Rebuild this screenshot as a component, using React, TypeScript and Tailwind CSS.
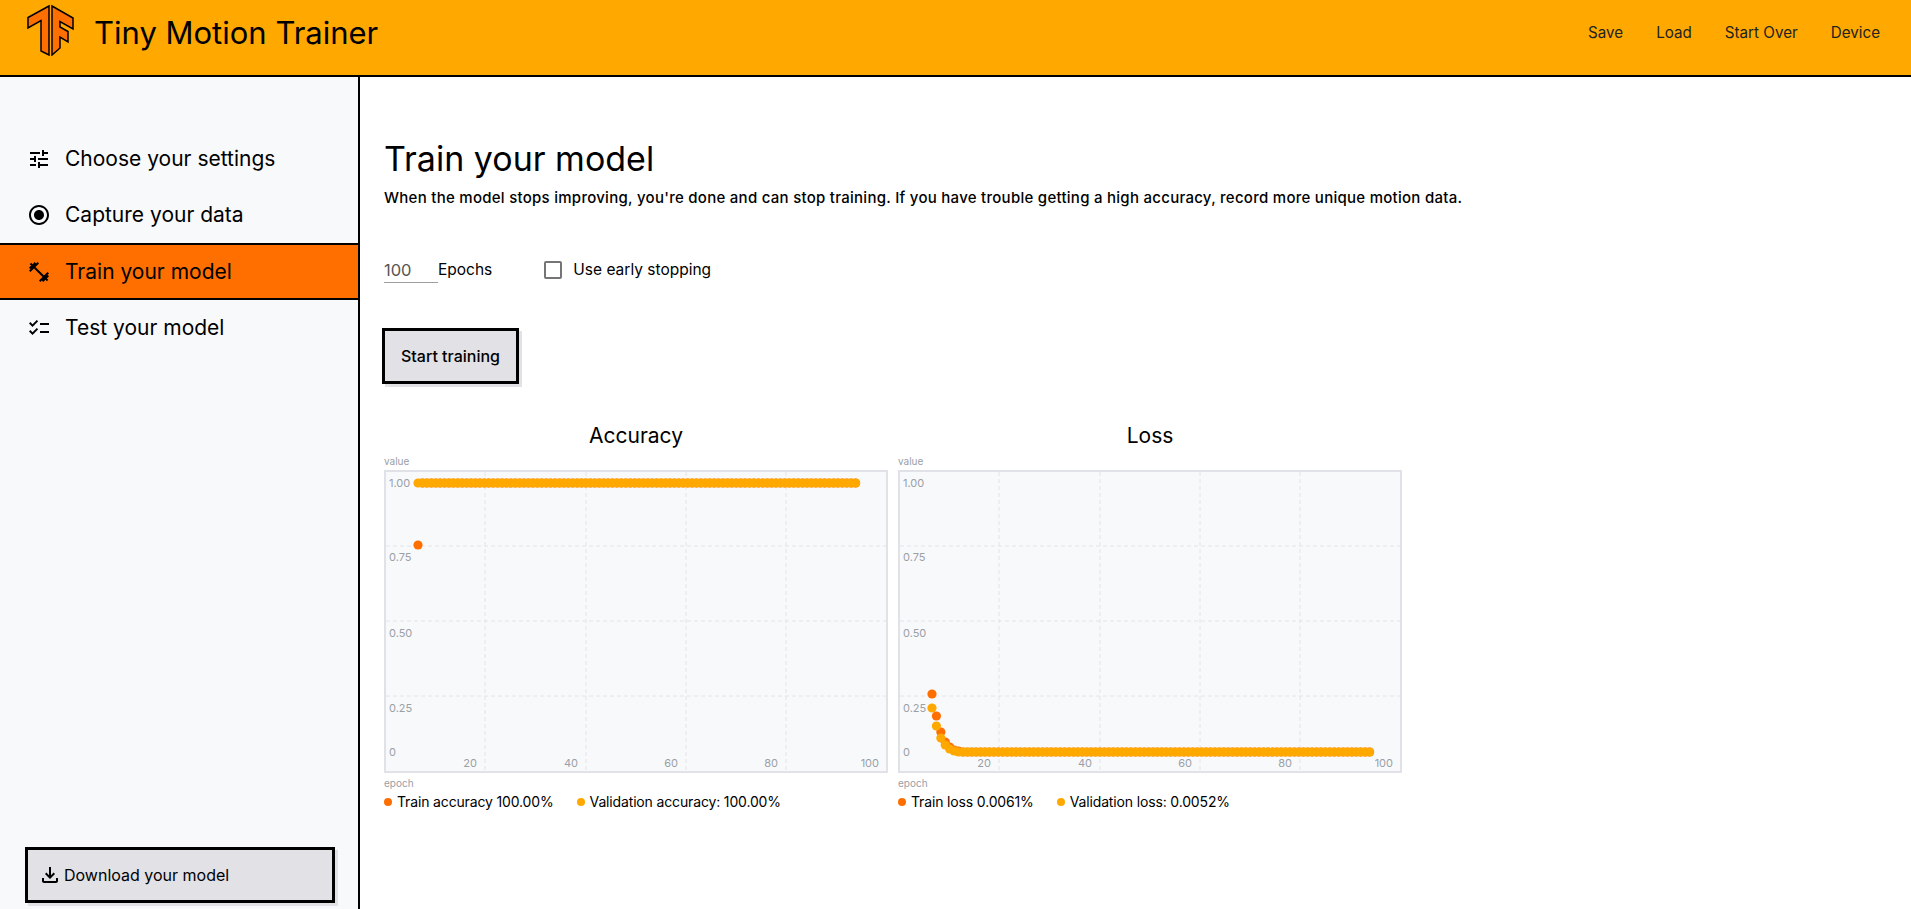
const font = '[font-family:Inter,"Liberation_Sans",sans-serif]';

const ORANGE = '#ff6f00';
const AMBER = '#ffa800';

const trainLoss = [224, 246, 262, 272, 277, 280, 281];
const valLoss = [238, 256, 268, 275, 279, 281];

function range(fn: (i: number) => number) {
  return Array.from({ length: 100 }, (_, i) => fn(i));
}

function Icon({ d, size = 24 }: { d: string; size?: number }) {
  return (
    <svg width={size} height={size} viewBox="0 0 24 24" fill="black" className="shrink-0">
      <path d={d} />
    </svg>
  );
}

const icons = {
  tune: 'M3 17v2h6v-2H3zM3 5v2h10V5H3zm10 16v-2h8v-2h-8v-2h-2v6h2zM7 9v2H3v2h4v2h2V9H7zm14 4v-2H11v2h10zm-6-4h2V7h4V5h-4V3h-2v6z',
  radio: 'M12 7c-2.76 0-5 2.24-5 5s2.24 5 5 5 5-2.24 5-5-2.24-5-5-5zm0-5C6.48 2 2 6.48 2 12s4.48 10 10 10 10-4.48 10-10S17.52 2 12 2zm0 18c-4.42 0-8-3.58-8-8s3.58-8 8-8 8 3.58 8 8-3.58 8-8 8z',
  fitness: 'M20.57 14.86L22 13.43 20.57 12 17 15.57 8.43 7 12 3.43 10.57 2 9.14 3.43 7.71 2 5.57 4.14 4.14 2.71 2.71 4.14l1.43 1.43L2 7.71l1.43 1.43L2 10.57 3.43 12 7 8.43 15.57 17 12 20.57 13.43 22l1.43-1.43L16.29 22l2.14-2.14 1.43 1.43 1.43-1.43-1.43-1.43L22 16.29z',
  checklist: 'M22 7h-9v2h9V7zm0 8h-9v2h9v-2zM5.54 11L2 7.46l1.41-1.41 2.12 2.12 4.24-4.24 1.41 1.41L5.54 11zm0 8L2 15.46l1.41-1.41 2.12 2.12 4.24-4.24 1.41 1.41L5.54 19z',
  download: 'M18 15v3H6v-3H4v3c0 1.1.9 2 2 2h12c1.1 0 2-.9 2-2v-3h-2zm-1-4l-1.41-1.41L13 12.17V4h-2v8.17L8.41 9.59 7 11l5 5 5-5z',
};

function Logo() {
  return (
    <svg width="48" height="52" viewBox="27 4 48 52" className="shrink-0">
      <g fill={ORANGE} stroke="black" strokeWidth="1.5" strokeLinejoin="miter">
        <polygon points="49,6 28,17.5 28,28 41,20.5 41,51 49,55" />
        <polygon points="52,6 73,18 73,29 60,21.5 60,27 68,31.5 68,42 60,37 60,48 52,55" />
      </g>
    </svg>
  );
}

function NavItem({ icon, label, active }: { icon: string; label: string; active?: boolean }) {
  return (
    <div className={active
      ? 'flex items-center h-[57px] pl-[27px] gap-[14px] bg-[#ff6f00] border-y-2 border-black'
      : 'flex items-center h-[56px] pl-[27px] gap-[14px]'}>
      <Icon d={icon} />
      <span className="text-[21px] text-black">{label}</span>
    </div>
  );
}

function Chart({ title, legend, train, val }: {
  title: string;
  legend: [string, string];
  train: number[];
  val: number[];
}) {
  return (
    <div className="w-[504px]">
      <div className="text-[21px] leading-[30px] text-center text-black">{title}</div>
      <div className="mt-[3px] text-[10px] leading-[14px] text-[#9aa0a6]">value</div>
      <div className="mt-[2px] w-[504px] h-[303px] border-2 border-[#e1e2e8] bg-[#f8f9fb]">
        <svg width="500" height="299" viewBox="2 2 500 299" className="block">
          <g stroke="#e3e4e9" strokeDasharray="4 3">
            {[101, 202, 302, 402].map((x) => <line key={x} x1={x} x2={x} y1="2" y2="301" />)}
            {[76, 151, 226].map((y) => <line key={y} x1="2" x2="502" y1={y} y2={y} />)}
          </g>
          <g fontSize="11" fill="#9aa0a6" fontFamily="Inter, sans-serif">
            {[['1.00', 17], ['0.75', 91], ['0.50', 167], ['0.25', 242], ['0', 286]].map(([t, y]) => (
              <text key={t} x="5" y={y}>{t}</text>
            ))}
            {[['20', 93], ['40', 194], ['60', 294], ['80', 394], ['100', 495]].map(([t, x]) => (
              <text key={t} x={x} y="297" textAnchor="end">{t}</text>
            ))}
          </g>
          {train.map((y, i) => <circle key={i} cx={34 + i * 4.42} cy={y} r="4.6" fill={ORANGE} />)}
          {val.map((y, i) => <circle key={i} cx={34 + i * 4.42} cy={y} r="4.6" fill={AMBER} />)}
        </svg>
      </div>
      <div className="mt-[3px] text-[10px] leading-[14px] text-[#9aa0a6]">epoch</div>
      <div className="mt-[2px] flex items-center text-[14px] leading-[20px] tracking-[-0.15px] text-black">
        <span className="w-2 h-2 rounded-full bg-[#ff6f00] mr-[5px]" />
        <span>{legend[0]}</span>
        <span className="w-2 h-2 rounded-full bg-[#ffa800] ml-[23px] mr-[5px]" />
        <span>{legend[1]}</span>
      </div>
    </div>
  );
}

export default function App() {
  return (
    <div className={`h-screen flex flex-col overflow-hidden bg-white ${font}`}>
      <header className="h-[77px] shrink-0 flex justify-between bg-[#ffa800] border-b-2 border-black">
        <div className="flex items-center pl-[27px] gap-[19px] pb-[15px]">
          <Logo />
          <span className="mt-[7px] text-[31px] text-black">Tiny Motion Trainer</span>
        </div>
        <nav className="flex items-center gap-[33px] pr-[31px] pb-[8px] text-[15.2px] text-[#222]">
          <span>Save</span>
          <span>Load</span>
          <span>Start Over</span>
          <span>Device</span>
        </nav>
      </header>
      <div className="flex flex-1 min-h-0">
        <aside className="w-[360px] shrink-0 flex flex-col justify-between bg-[#f8f9fb] border-r-2 border-black">
          <div className="pt-[54px]">
            <NavItem icon={icons.tune} label="Choose your settings" />
            <NavItem icon={icons.radio} label="Capture your data" />
            <NavItem icon={icons.fitness} label="Train your model" active />
            <NavItem icon={icons.checklist} label="Test your model" />
          </div>
          <div className="pl-[25px] pb-[6px]">
            <button className="w-[310px] h-[56px] flex items-center gap-[2px] pl-[10px] bg-[#e1e1e6] border-[3px] border-black shadow-[3px_3px_0_#e1e1e6] text-[16px] text-black">
              <Icon d={icons.download} size={24} />
              Download your model
            </button>
          </div>
        </aside>
        <main className="flex-1 pl-[24px] pt-[60px]">
          <h1 className="text-[34px] leading-[44px] text-black">Train your model</h1>
          <p className="mt-[7px] text-[15px] leading-[20px] tracking-[0.27px] font-medium text-black">
            When the model stops improving, you're done and can stop training. If you have trouble getting a high accuracy, record more unique motion data.
          </p>
          <div className="mt-[50px] flex items-center h-[24px] text-[15.5px] text-black">
            <span className="w-[54px] h-[24px] leading-[24px] text-[16.5px] text-[#555] border-b border-[#9e9e9e] box-content">100</span>
            <span>Epochs</span>
            <span className="ml-[52px] w-[18px] h-[18px] rounded-[2px] border-2 border-[#757575]" />
            <span className="ml-[11px]">Use early stopping</span>
          </div>
          <button className="mt-[46px] -ml-[2px] w-[137px] h-[56px] bg-[#e1e1e6] border-[3px] border-black shadow-[3px_3px_0_#e1e1e6] text-[16px] font-medium text-black">
            Start training
          </button>
          <div className="mt-[37px] flex gap-[10px]">
            <Chart
              title="Accuracy"
              legend={['Train accuracy 100.00%', 'Validation accuracy: 100.00%']}
              train={range((i) => (i === 0 ? 75 : 13))}
              val={range(() => 13)}
            />
            <Chart
              title="Loss"
              legend={['Train loss 0.0061%', 'Validation loss: 0.0052%']}
              train={range((i) => trainLoss[i] ?? 282)}
              val={range((i) => valLoss[i] ?? 282)}
            />
          </div>
        </main>
      </div>
    </div>
  );
}
